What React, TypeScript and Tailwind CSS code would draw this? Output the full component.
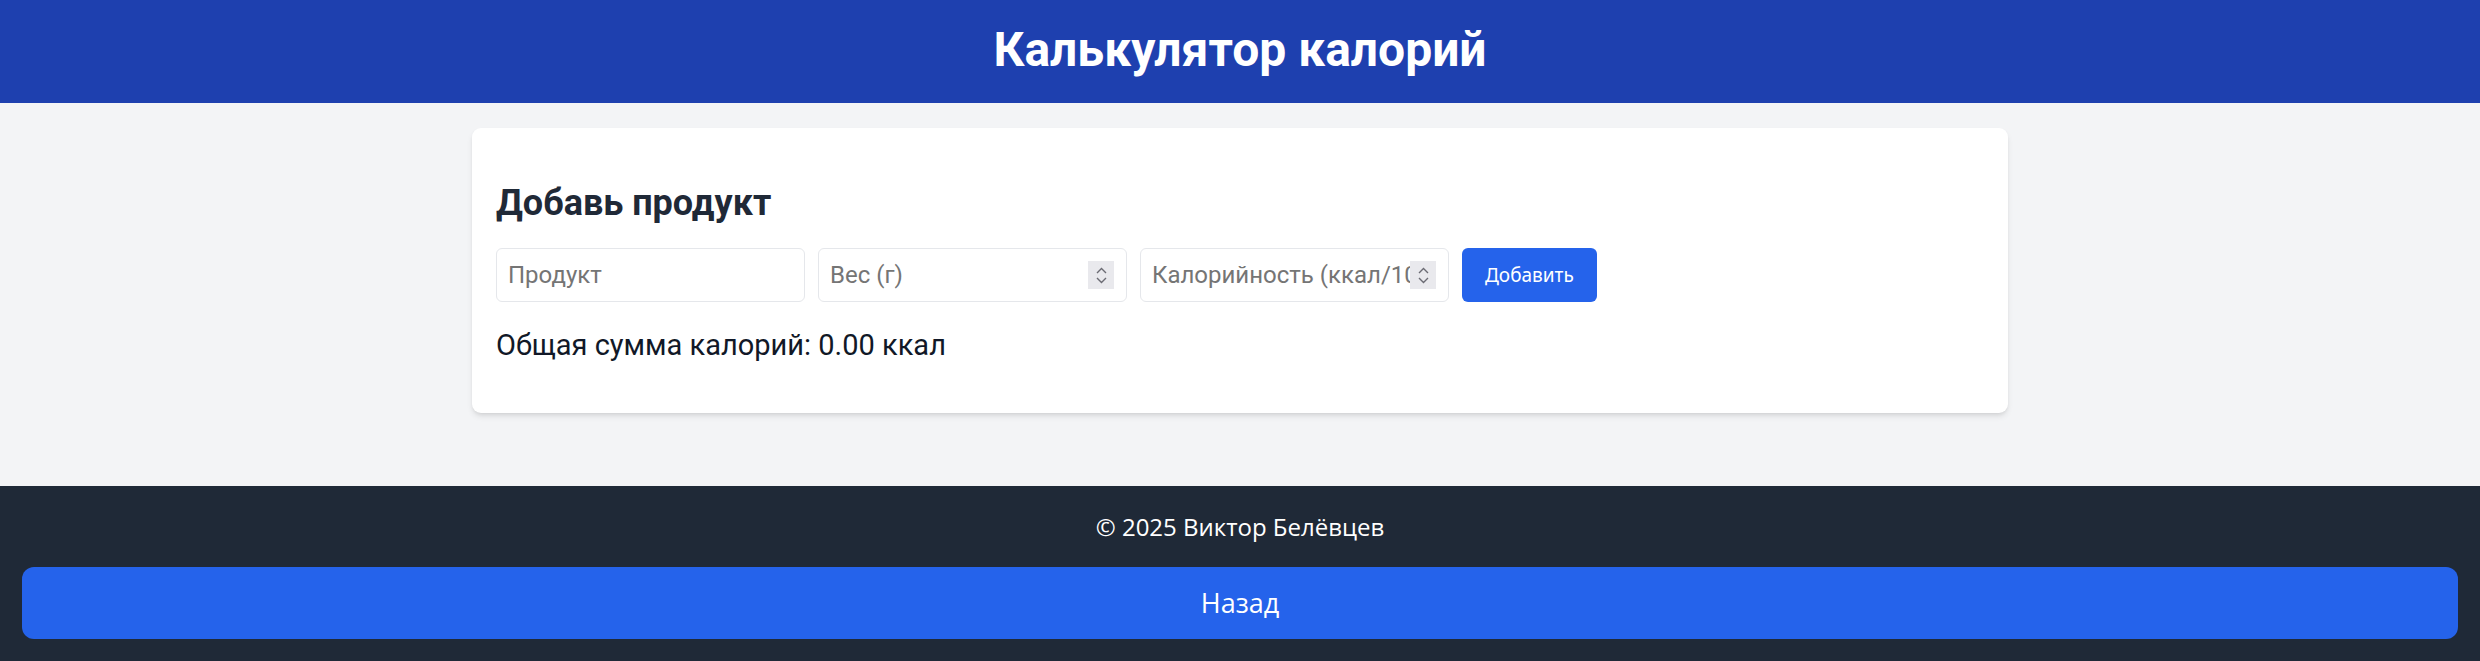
import { useState } from "react";

function Spinner() {
  return (
    <div className="flex h-[28px] w-[26px] shrink-0 flex-col items-center justify-center gap-[3px] bg-[#e9e9ed]">
      <svg width="11" height="7" viewBox="0 0 11 7" fill="none">
        <path d="M1 6 L5.5 1.5 L10 6" stroke="#6b6b73" strokeWidth="1.4" />
      </svg>
      <svg width="11" height="7" viewBox="0 0 11 7" fill="none">
        <path d="M1 1 L5.5 5.5 L10 1" stroke="#6b6b73" strokeWidth="1.4" />
      </svg>
    </div>
  );
}

function Field({
  placeholder,
  value,
  onChange,
  numeric
}: {
  placeholder: string;
  value: string;
  onChange: (value: string) => void;
  numeric?: boolean;
}) {
  return (
    <div className="flex h-[54px] w-[309px] items-center rounded-[6px] border border-[#e5e7eb] bg-white pl-[11px] pr-[12px]">
      <input
        type="text"
        inputMode={numeric ? "decimal" : "text"}
        placeholder={placeholder}
        value={value}
        onChange={(event) => onChange(event.target.value)}
        className="min-w-0 flex-1 bg-transparent text-[24px] leading-[36px] text-[#111827] outline-none placeholder:text-[#757575]"
      />
      {numeric ? <Spinner /> : null}
    </div>
  );
}

export default function App() {
  const [name, setName] = useState("");
  const [weight, setWeight] = useState("");
  const [kcal, setKcal] = useState("");
  const [total, setTotal] = useState(0);

  function addProduct() {
    const w = parseFloat(weight);
    const k = parseFloat(kcal);
    if (!name.trim() || isNaN(w) || isNaN(k)) return;
    setTotal((current) => current + (w * k) / 100);
    setName("");
    setWeight("");
    setKcal("");
  }

  return (
    <div className="flex min-h-screen flex-col bg-[#f3f4f6] font-['Roboto',sans-serif]">
      <header className="bg-[#1e40af] pt-[23px] pb-[26px] text-center">
        <h1 className="text-[48px] leading-[54px] font-bold text-white">Калькулятор калорий</h1>
      </header>

      <main className="flex-1 pt-[25px]">
        <div className="mx-auto w-[1536px] rounded-[9px] bg-white px-6 pt-[45px] pb-[47px] shadow-md">
          <h2 className="text-[36px] leading-[60px] font-bold text-[#1f2937]">Добавь продукт</h2>
          <div className="mt-[15px] flex gap-[13px]">
            <Field placeholder="Продукт" value={name} onChange={setName} />
            <Field placeholder="Вес (г)" value={weight} onChange={setWeight} numeric />
            <Field placeholder="Калорийность (ккал/100г)" value={kcal} onChange={setKcal} numeric />
            <button
              type="button"
              onClick={addProduct}
              className="h-[54px] rounded-[6px] bg-[#2563eb] px-[23px] font-['Noto_Sans',sans-serif] text-[19px] text-white"
            >
              Добавить
            </button>
          </div>
          <p className="mt-[22px] text-[29px] leading-[42px] text-[#111827]">
            Общая сумма калорий: {total.toFixed(2)} ккал
          </p>
        </div>
      </main>

      <footer className="bg-[#1f2937] px-[22px] pt-[23px] pb-[22px] text-center font-['Open_Sans',sans-serif]">
        <p className="text-[24px] leading-[36px] text-white">© 2025 Виктор Белёвцев</p>
        <button type="button" className="mt-[22px] h-[72px] w-full rounded-[12px] bg-[#2563eb] text-[27px] text-white">
          Назад
        </button>
      </footer>
    </div>
  );
}
